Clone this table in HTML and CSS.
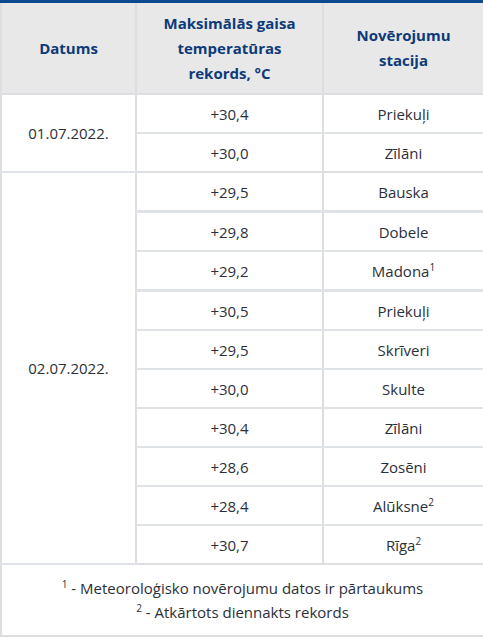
FILE: index.html
```html
<!DOCTYPE html>
<html lang="lv">
<head>
<meta charset="utf-8">
<link rel="stylesheet" href="styles.css">
</head>
<body>
<div class="wrap">
<table class="records">
  <colgroup>
    <col class="col-date">
    <col class="col-temp">
    <col class="col-st">
  </colgroup>
  <thead>
    <tr>
      <th>Datums</th>
      <th>Maksimālās gaisa temperatūras rekords, °C</th>
      <th>Novērojumu stacija</th>
    </tr>
  </thead>
  <tbody>
    <tr><td class="date" rowspan="2">01.07.2022.</td><td>+30,4</td><td>Priekuļi</td></tr>
    <tr class="grp"><td>+30,0</td><td>Zīlāni</td></tr>
    <tr class="thick"><td class="date" rowspan="10">02.07.2022.</td><td>+29,5</td><td>Bauska</td></tr>
    <tr><td>+29,8</td><td>Dobele</td></tr>
    <tr class="thick"><td>+29,2</td><td>Madona<sup>1</sup></td></tr>
    <tr><td>+30,5</td><td>Priekuļi</td></tr>
    <tr><td>+29,5</td><td>Skrīveri</td></tr>
    <tr><td>+30,0</td><td>Skulte</td></tr>
    <tr><td>+30,4</td><td>Zīlāni</td></tr>
    <tr><td>+28,6</td><td>Zosēni</td></tr>
    <tr><td>+28,4</td><td>Alūksne<sup>2</sup></td></tr>
    <tr class="grp"><td>+30,7</td><td>Rīga<sup>2</sup></td></tr>
  </tbody>
  <tfoot>
    <tr>
      <td colspan="3" class="notes">
        <div><sup>1</sup> - Meteoroloģisko novērojumu datos ir pārtaukums</div>
        <div><sup>2</sup> - Atkārtots diennakts rekords</div>
      </td>
    </tr>
  </tfoot>
</table>
</div>
</body>
</html>
```

FILE: styles.css
```css
html, body {
  margin: 0;
  padding: 0;
  background: #ffffff;
}
.wrap {
  width: 483px;
  border-top: 3px solid #0b4a8f;
  box-sizing: border-box;
}
.records {
  width: 483px;
  border-collapse: collapse;
  font-family: "Open Sans", "Lato", sans-serif;
  font-size: 15px;
  color: #2c2f38;
  table-layout: fixed;
}
.col-date { width: 135px; }
.col-temp { width: 187px; }
.col-st { width: 161px; }
.records th,
.records td {
  border: 2px solid #dcdee2;
  border-top: none;
  text-align: center;
  padding: 0;
}
.records thead th {
  background: #e8e8e8;
  color: #0d3a78;
  font-weight: 700;
  height: 90px;
  line-height: 25px;
  padding: 0 22px;
  border-bottom: 2px solid #dcdee2;
}
.records tbody td {
  height: 37px;
  line-height: 20px;
}
.records tbody tr td { border-bottom: 2px solid #dfe2e7; }
.records tbody tr.grp td { border-bottom: 2px solid #dcdee2; }
.records tbody tr.thick td:not(.date) { border-bottom: 3px solid #dfe2e8; }
.records td.date { vertical-align: middle; }
.records sup {
  font-size: 10px;
  line-height: 0;
  vertical-align: 6px;
}
.records td.notes {
  height: 66px;
  line-height: 24px;
  padding: 2px 0 2px;
  border-bottom: 2px solid #dcdee2;
}
```
